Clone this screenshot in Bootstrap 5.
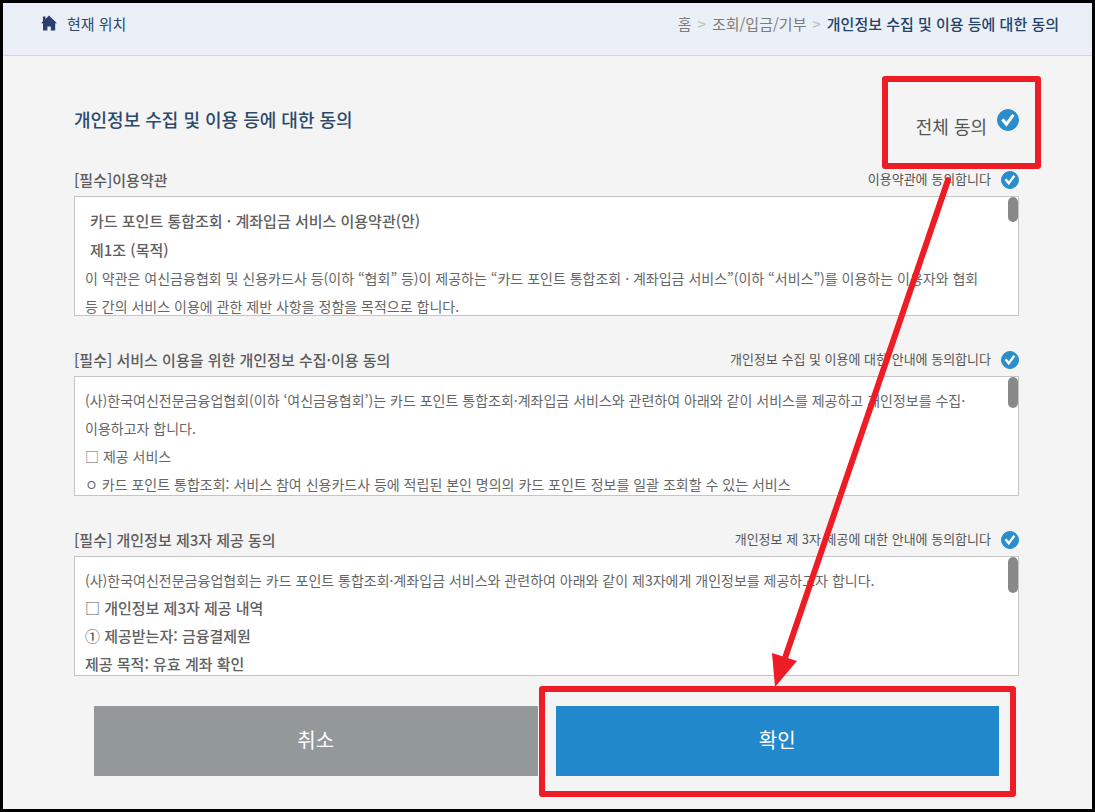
<!DOCTYPE html>
<html lang="ko">
<head>
<meta charset="utf-8">
<meta name="viewport" content="width=device-width, initial-scale=1">
<title>개인정보 수집 및 이용 등에 대한 동의</title>
<link href="https://cdn.jsdelivr.net/npm/bootstrap@5.3.0/dist/css/bootstrap.min.css" rel="stylesheet">
<style>
  body { font-family: "Noto Sans CJK KR", sans-serif; background: #f4f4f4; color: #555; border: 3px solid #000; }
  .top-bar { background: #ebeff8; border-bottom: 1px solid #c9d9e0; height: 53px; padding: 0 33px 10px 38px; font-size: 15px; color: #2c4a6e; }
  .home-group { gap: 10px; }
  .home-icon { width: 16px; height: 16px; margin-bottom: 3px; }
  .crumbs { color: #7c7c7c; }
  .crumbs a { color: inherit; text-decoration: none; }
  .crumbs .sep { color: #bbb; margin: 0 6px; }
  .crumbs .here { color: #1f4468; font-weight: 500; }
  .agree-page { padding: 36px 73px 33px 71px; }
  .title-row { height: 56px; margin-bottom: 16px; }
  .page-title { font-size: 18px; font-weight: 500; color: #2a4a6d; }
  .all-label { font-size: 18px; padding-top: 12px; margin-right: 10px; }
  .term-list { gap: 28px; }
  .term-head { height: 32px; }
  .term-title { font-size: 15px; font-weight: 500; color: #5c5c5c; }
  .term-agree { gap: 10px; }
  .term-label { font-size: 13px; padding-bottom: 2px; }
  .round-check { appearance: none; border-radius: 50%; width: 18px; height: 18px; margin: 0; border: 1px solid #2b8ecb; background: #fff center/100% no-repeat; }
  .round-check:checked { background-color: #2b8ecb; background-image: url("data:image/svg+xml,%3Csvg xmlns='http://www.w3.org/2000/svg' viewBox='0 0 20 20'%3E%3Cpath d='M4.4 9.2l4 5L15.4 4.8' fill='none' stroke='%23fff' stroke-width='3'/%3E%3C/svg%3E"); }
  .round-check.big { width: 22px; height: 22px; }
  .term-box { height: 120px; background: #fff; border: 1px solid #c5c5c5; }
  .term-text { height: 100%; overflow-y: auto; scrollbar-width: none; padding: 9px 22px 10px 10px; font-size: 14px; line-height: 28px; color: #666; }
  .term-text::-webkit-scrollbar { display: none; }
  .term-text p { margin: 0; }
  .term-text .strong-line { font-size: 15px; font-weight: 500; color: #606060; }
  .term-text .article { padding-left: 5px; line-height: 29px; }
  .thumb { top: 0; right: 0; width: 10px; border-radius: 5px; background: #888; }
  .actions { margin-top: 30px; padding: 0 20px; gap: 18px; }
  .action-btn { height: 70px; border: 0; border-radius: 0; font-size: 20px; color: #fff; padding: 0 0 2px; }
  .btn-cancel, .btn-cancel:hover { background: #93989b; color: #fff; }
  .btn-ok, .btn-ok:hover { background: #2188cc; color: #fff; }
  .frame { border: 6px solid #ee1c25; border-radius: 3px; pointer-events: none; }
  .frame-all { top: -16px; right: -22px; width: 159px; height: 93px; }
  .frame-ok { inset: -20px -17px -21px -17px; }
  .arrow { top: 80px; right: 68px; width: 190px; height: 520px; pointer-events: none; }
</style>
</head>
<body class="min-vh-100">
<header class="top-bar d-flex align-items-center justify-content-between">
  <div class="home-group d-flex align-items-center">
    <svg class="home-icon" viewBox="0 0 16 16" fill="#2c3e6b" aria-hidden="true"><path d="M8 0.5L16 8.2h-1.8V15.5H9.8v-4.1H6.4v4.1H2V8.2H0l2-2V1.6h2.4v2.3z"/></svg>
    <span>현재 위치</span>
  </div>
  <nav class="crumbs d-flex align-items-center" aria-label="현재 위치">
    <a href="#">홈</a><span class="sep">&gt;</span><a href="#">조회/입금/기부</a><span class="sep">&gt;</span><a href="#" class="here" aria-current="page">개인정보 수집 및 이용 등에 대한 동의</a>
  </nav>
</header>

<main class="agree-page">
  <form class="position-relative">
    <div class="title-row position-relative d-flex align-items-center justify-content-between">
      <h1 class="page-title m-0">개인정보 수집 및 이용 등에 대한 동의</h1>
      <div class="d-flex align-items-center">
        <label class="all-label" for="all">전체 동의</label>
        <input class="round-check big" type="checkbox" id="all" checked>
      </div>
      <span class="frame frame-all position-absolute"></span>
    </div>

    <div class="term-list d-flex flex-column">
      <section>
        <div class="term-head d-flex align-items-center justify-content-between">
          <h2 class="term-title m-0">[필수]이용약관</h2>
          <div class="term-agree d-flex align-items-center">
            <label class="term-label" for="t1">이용약관에 동의합니다</label>
            <input class="round-check" type="checkbox" id="t1" checked>
          </div>
        </div>
        <div class="term-box position-relative">
          <div class="term-text" tabindex="0">
            <p class="strong-line article">카드 포인트 통합조회 · 계좌입금 서비스 이용약관(안)</p>
            <p class="strong-line article">제1조 (목적)</p>
            <p>이 약관은 여신금융협회 및 신용카드사 등(이하 “협회” 등)이 제공하는 “카드 포인트 통합조회 · 계좌입금 서비스”(이하 “서비스”)를 이용하는 이용자와 협회<br>등 간의 서비스 이용에 관한 제반 사항을 정함을 목적으로 합니다.</p>
          </div>
          <span class="thumb position-absolute" style="height:25px"></span>
        </div>
      </section>

      <section>
        <div class="term-head d-flex align-items-center justify-content-between">
          <h2 class="term-title m-0">[필수] 서비스 이용을 위한 개인정보 수집·이용 동의</h2>
          <div class="term-agree d-flex align-items-center">
            <label class="term-label" for="t2">개인정보 수집 및 이용에 대한 안내에 동의합니다</label>
            <input class="round-check" type="checkbox" id="t2" checked>
          </div>
        </div>
        <div class="term-box position-relative">
          <div class="term-text" tabindex="0">
            <p>(사)한국여신전문금융업협회(이하 ‘여신금융협회’)는 카드 포인트 통합조회·계좌입금 서비스와 관련하여 아래와 같이 서비스를 제공하고 개인정보를 수집·<br>이용하고자 합니다.</p>
            <p>□ 제공 서비스</p>
            <p>ㅇ 카드 포인트 통합조회: 서비스 참여 신용카드사 등에 적립된 본인 명의의 카드 포인트 정보를 일괄 조회할 수 있는 서비스</p>
          </div>
          <span class="thumb position-absolute" style="height:31px"></span>
        </div>
      </section>

      <section>
        <div class="term-head d-flex align-items-center justify-content-between">
          <h2 class="term-title m-0">[필수] 개인정보 제3자 제공 동의</h2>
          <div class="term-agree d-flex align-items-center">
            <label class="term-label" for="t3">개인정보 제 3자 제공에 대한 안내에 동의합니다</label>
            <input class="round-check" type="checkbox" id="t3" checked>
          </div>
        </div>
        <div class="term-box position-relative">
          <div class="term-text" tabindex="0">
            <p>(사)한국여신전문금융업협회는 카드 포인트 통합조회·계좌입금 서비스와 관련하여 아래와 같이 제3자에게 개인정보를 제공하고자 합니다.</p>
            <p class="strong-line">□ 개인정보 제3자 제공 내역</p>
            <p class="strong-line">① 제공받는자: 금융결제원</p>
            <p class="strong-line">제공 목적: 유효 계좌 확인</p>
          </div>
          <span class="thumb position-absolute" style="height:36px"></span>
        </div>
      </section>
    </div>

    <div class="actions d-flex">
      <button type="button" class="btn action-btn btn-cancel flex-fill w-50">취소</button>
      <div class="position-relative flex-fill w-50">
        <button type="submit" class="btn action-btn btn-ok w-100 d-block">확인</button>
        <span class="frame frame-ok position-absolute"></span>
      </div>
    </div>

    <svg class="arrow position-absolute" viewBox="0 0 190 520" aria-hidden="true">
      <path d="M187 8L22 492" stroke="#ee1c25" stroke-width="6" stroke-linecap="round"/>
      <path d="M11 481l25 8L14 515z" fill="#ee1c25"/>
    </svg>
  </form>
</main>
<script src="https://cdn.jsdelivr.net/npm/bootstrap@5.3.0/dist/js/bootstrap.bundle.min.js"></script>
</body>
</html>
